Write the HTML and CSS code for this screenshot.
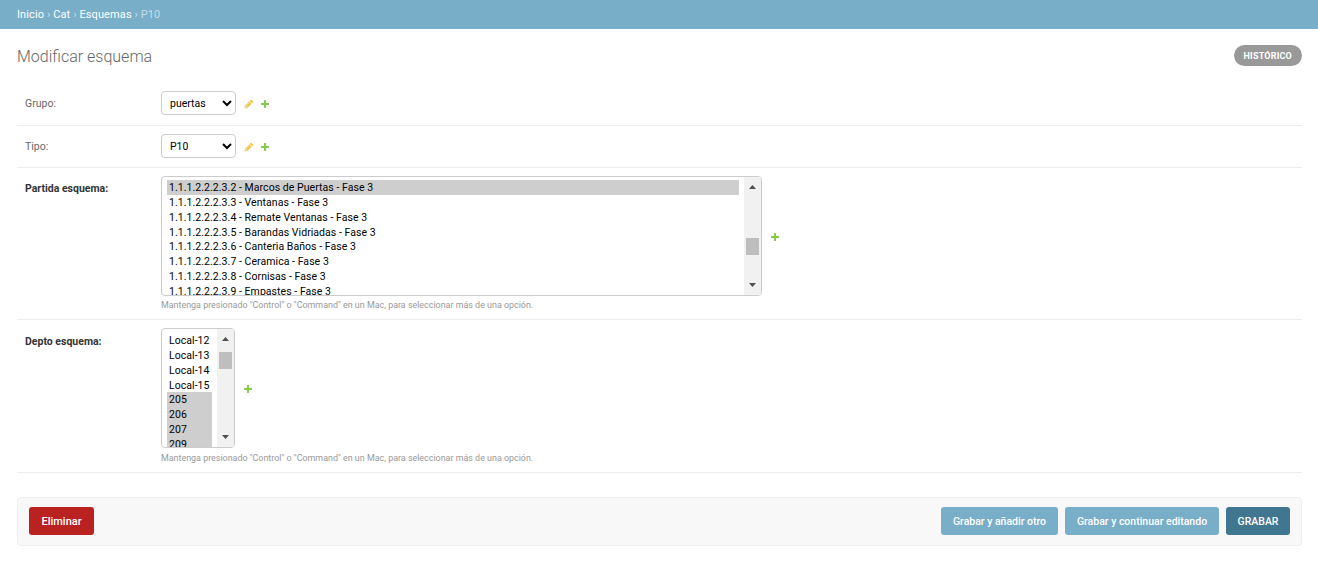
FILE: index.html
```html
<!DOCTYPE html>
<html lang="es">
<head>
<meta charset="utf-8">
<title>Modificar esquema</title>
<link rel="stylesheet" href="styles.css">
</head>
<body>
<nav class="breadcrumbs"><a href="#">Inicio</a> <span class="sep">›</span> <a href="#">Cat</a> <span class="sep">›</span> <a href="#">Esquemas</a> <span class="sep">›</span> P10</nav>
<main class="content">
  <div class="title-row">
    <h1>Modificar esquema</h1>
    <a class="history" href="#">Histórico</a>
  </div>
  <form>
    <div class="form-row row-single row-first">
      <label class="field-label" for="grupo">Grupo:</label>
      <div class="field-line">
        <select id="grupo" class="single"><option>puertas</option></select>
        <svg class="icon icon-change" viewBox="0 0 1792 1792"><path d="M491 1536l91-91-235-235-91 91v107h128v128h107zm523-928q0-22-22-22-10 0-17 7l-542 542q-7 7-7 17 0 22 22 22 10 0 17-7l542-542q7-7 7-17zm-54-192l416 416-832 832h-416v-416zm683 96q0 53-37 90l-166 166-416-416 166-165q36-38 90-38 53 0 91 38l235 234q37 39 37 91z"/></svg>
        <svg class="icon icon-add" viewBox="0 0 1792 1792"><path d="M1600 796v192q0 40-28 68t-68 28h-416v416q0 40-28 68t-68 28h-192q-40 0-68-28t-28-68v-416h-416q-40 0-68-28t-28-68v-192q0-40 28-68t68-28h416v-416q0-40 28-68t68-28h192q40 0 68 28t28 68v416h416q40 0 68 28t28 68z"/></svg>
      </div>
    </div>
    <div class="form-row row-single row-second">
      <label class="field-label" for="tipo">Tipo:</label>
      <div class="field-line">
        <select id="tipo" class="single"><option>P10</option></select>
        <svg class="icon icon-change" viewBox="0 0 1792 1792"><path d="M491 1536l91-91-235-235-91 91v107h128v128h107zm523-928q0-22-22-22-10 0-17 7l-542 542q-7 7-7 17 0 22 22 22 10 0 17-7l542-542q7-7 7-17zm-54-192l416 416-832 832h-416v-416zm683 96q0 53-37 90l-166 166-416-416 166-165q36-38 90-38 53 0 91 38l235 234q37 39 37 91z"/></svg>
        <svg class="icon icon-add" viewBox="0 0 1792 1792"><path d="M1600 796v192q0 40-28 68t-68 28h-416v416q0 40-28 68t-68 28h-192q-40 0-68-28t-28-68v-416h-416q-40 0-68-28t-28-68v-192q0-40 28-68t68-28h416v-416q0-40 28-68t68-28h192q40 0 68 28t28 68v416h416q40 0 68 28t28 68z"/></svg>
      </div>
    </div>
    <div class="form-row">
      <span class="field-label required">Partida esquema:</span>
      <div class="field-body">
        <div class="field-line">
          <div class="listbox listbox-wide" role="listbox">
            <div class="options options-wide">
              <div class="opt selected">1.1.1.2.2.2.3.2 - Marcos de Puertas - Fase 3</div>
              <div class="opt">1.1.1.2.2.2.3.3 - Ventanas - Fase 3</div>
              <div class="opt">1.1.1.2.2.2.3.4 - Remate Ventanas - Fase 3</div>
              <div class="opt">1.1.1.2.2.2.3.5 - Barandas Vidriadas - Fase 3</div>
              <div class="opt">1.1.1.2.2.2.3.6 - Canteria Baños - Fase 3</div>
              <div class="opt">1.1.1.2.2.2.3.7 - Ceramica - Fase 3</div>
              <div class="opt">1.1.1.2.2.2.3.8 - Cornisas - Fase 3</div>
              <div class="opt">1.1.1.2.2.2.3.9 - Empastes - Fase 3</div>
            </div>
            <div class="scrollbar">
              <span class="arrow arrow-up"></span>
              <span class="thumb thumb-wide"></span>
              <span class="arrow arrow-down"></span>
            </div>
          </div>
          <svg class="icon icon-add icon-add-list" viewBox="0 0 1792 1792"><path d="M1600 796v192q0 40-28 68t-68 28h-416v416q0 40-28 68t-68 28h-192q-40 0-68-28t-28-68v-416h-416q-40 0-68-28t-28-68v-192q0-40 28-68t68-28h416v-416q0-40 28-68t68-28h192q40 0 68 28t28 68v416h416q40 0 68 28t28 68z"/></svg>
        </div>
        <p class="help">Mantenga presionado "Control" o "Command" en un Mac, para seleccionar más de una opción.</p>
      </div>
    </div>
    <div class="form-row row-depto">
      <span class="field-label required">Depto esquema:</span>
      <div class="field-body">
        <div class="field-line">
          <div class="listbox listbox-narrow" role="listbox">
            <div class="options options-narrow">
              <div class="opt">Local-12</div>
              <div class="opt">Local-13</div>
              <div class="opt">Local-14</div>
              <div class="opt">Local-15</div>
              <div class="opt selected">205</div>
              <div class="opt selected">206</div>
              <div class="opt selected">207</div>
              <div class="opt selected">209</div>
            </div>
            <div class="scrollbar">
              <span class="arrow arrow-up"></span>
              <span class="thumb thumb-narrow"></span>
              <span class="arrow arrow-down"></span>
            </div>
          </div>
          <svg class="icon icon-add icon-add-list" viewBox="0 0 1792 1792"><path d="M1600 796v192q0 40-28 68t-68 28h-416v416q0 40-28 68t-68 28h-192q-40 0-68-28t-28-68v-416h-416q-40 0-68-28t-28-68v-192q0-40 28-68t68-28h416v-416q0-40 28-68t68-28h192q40 0 68 28t28 68v416h416q40 0 68 28t28 68z"/></svg>
        </div>
        <p class="help">Mantenga presionado "Control" o "Command" en un Mac, para seleccionar más de una opción.</p>
      </div>
    </div>
    <div class="submit-row">
      <a class="btn btn-delete" href="#">Eliminar</a>
      <div class="submit-group">
        <button type="button" class="btn btn-light btn-add">Grabar y añadir otro</button>
        <button type="button" class="btn btn-light btn-continue">Grabar y continuar editando</button>
        <button type="button" class="btn btn-default">GRABAR</button>
      </div>
    </div>
  </form>
</main>
</body>
</html>
```
FILE: styles.css
```css
* { box-sizing: border-box; }
html, body { margin: 0; padding: 0; }
body {
  font-family: Roboto, "Liberation Sans", sans-serif;
  font-size: 11px;
  color: #333;
  background: #fff;
}
.breadcrumbs {
  height: 29px;
  padding: 0 17px;
  background: #79aec8;
  color: #c4dce8;
  font-size: 11px;
  letter-spacing: 0.11px;
  line-height: 29px;
}
.breadcrumbs a { color: #fff; text-decoration: none; }
.sep { color: #c4dce8; }
.content { padding: 0 16px 0 17px; }
.title-row {
  display: flex;
  justify-content: space-between;
  align-items: flex-start;
  height: 54px;
  padding-top: 16px;
}
h1 {
  margin: 0;
  font-size: 16px;
  line-height: 23px;
  font-weight: 300;
  color: #666;
}
.history {
  height: 21px;
  padding: 0 10px;
  border-radius: 11px;
  background: #999;
  color: #fff;
  font-size: 9px;
  font-weight: 700;
  letter-spacing: 0.2px;
  line-height: 23px;
  text-transform: uppercase;
  text-decoration: none;
}
.form-row {
  display: flex;
  padding: 8px 0 8px 8px;
  border-bottom: 1px solid #eee;
}
.row-first { padding-bottom: 10px; }
.row-second { padding-bottom: 9px; }
.field-label {
  width: 136px;
  flex: none;
  padding-top: 6px;
  line-height: 14px;
  font-size: 10.5px;
  color: #666;
}
.required { font-weight: 700; color: #333; }
.row-depto .field-label { padding-top: 7px; }
.field-line { display: flex; align-items: center; }
.single {
  width: 75px;
  height: 24px;
  padding: 0 4px;
  border: 1px solid #ccc;
  border-radius: 4px;
  background-color: #fff;
  color: #000;
  font-family: inherit;
  font-size: 10.5px;
}
.icon { flex: none; width: 10px; height: 10px; margin-top: 2px; }
.icon-change { margin-left: 8px; fill: #f0c245; }
.icon-add { margin-left: 6px; fill: #86c94b; }
.icon-add-list { margin-left: 8px; }
.listbox {
  display: flex;
  height: 120px;
  overflow: hidden;
  border: 1px solid #ccc;
  border-radius: 4px;
  background: #fff;
}
.listbox-wide { width: 601px; }
.listbox-narrow { width: 74px; }
.options {
  flex: 1;
  min-width: 0;
  padding: 0 5px;
  overflow: hidden;
  color: #000;
  font-size: 10.5px;
  letter-spacing: 0.05px;
  line-height: 13.85px;
}
.options-wide { padding-top: 3px; }
.options-narrow { padding-top: 4px; }
.opt { padding: 1px 2px 0; white-space: nowrap; }
.selected { background: #cecece; }
.scrollbar {
  flex: none;
  width: 17px;
  display: flex;
  flex-direction: column;
  align-items: center;
  padding: 8px 0;
  background: #f1f1f1;
}
.arrow { width: 7px; height: 4px; flex: none; background: #505050; }
.arrow-up { clip-path: polygon(50% 0, 100% 100%, 0 100%); }
.arrow-down { margin-top: auto; clip-path: polygon(0 0, 100% 0, 50% 100%); }
.thumb { width: 13px; height: 17px; flex: none; background: #bebebe; }
.thumb-wide { margin-top: 49px; }
.thumb-narrow { margin-top: 11px; }
.help {
  margin: 4px 0 0;
  font-size: 8.92px;
  line-height: 11px;
  color: #999;
}
.row-depto .help { margin-top: 5px; }
.submit-row {
  display: flex;
  justify-content: space-between;
  margin-top: 24px;
  padding: 9px 11px 10px;
  height: 49px;
  border: 1px solid #eee;
  border-radius: 4px;
  background: #f8f8f8;
}
.submit-group { display: flex; gap: 7px; }
.btn {
  display: flex;
  align-items: center;
  justify-content: center;
  height: 28px;
  border: 0;
  border-radius: 3px;
  padding: 1px 0 0;
  color: #fff;
  font-family: inherit;
  font-size: 10.5px;
  font-weight: 500;
  white-space: nowrap;
  text-decoration: none;
}
.btn-delete { width: 65px; font-size: 11px; background: #ba2121; }
.btn-light { background: #79aec8; }
.btn-add { width: 117px; }
.btn-continue { width: 154px; }
.btn-default { width: 64px; background: #417690; }
```
